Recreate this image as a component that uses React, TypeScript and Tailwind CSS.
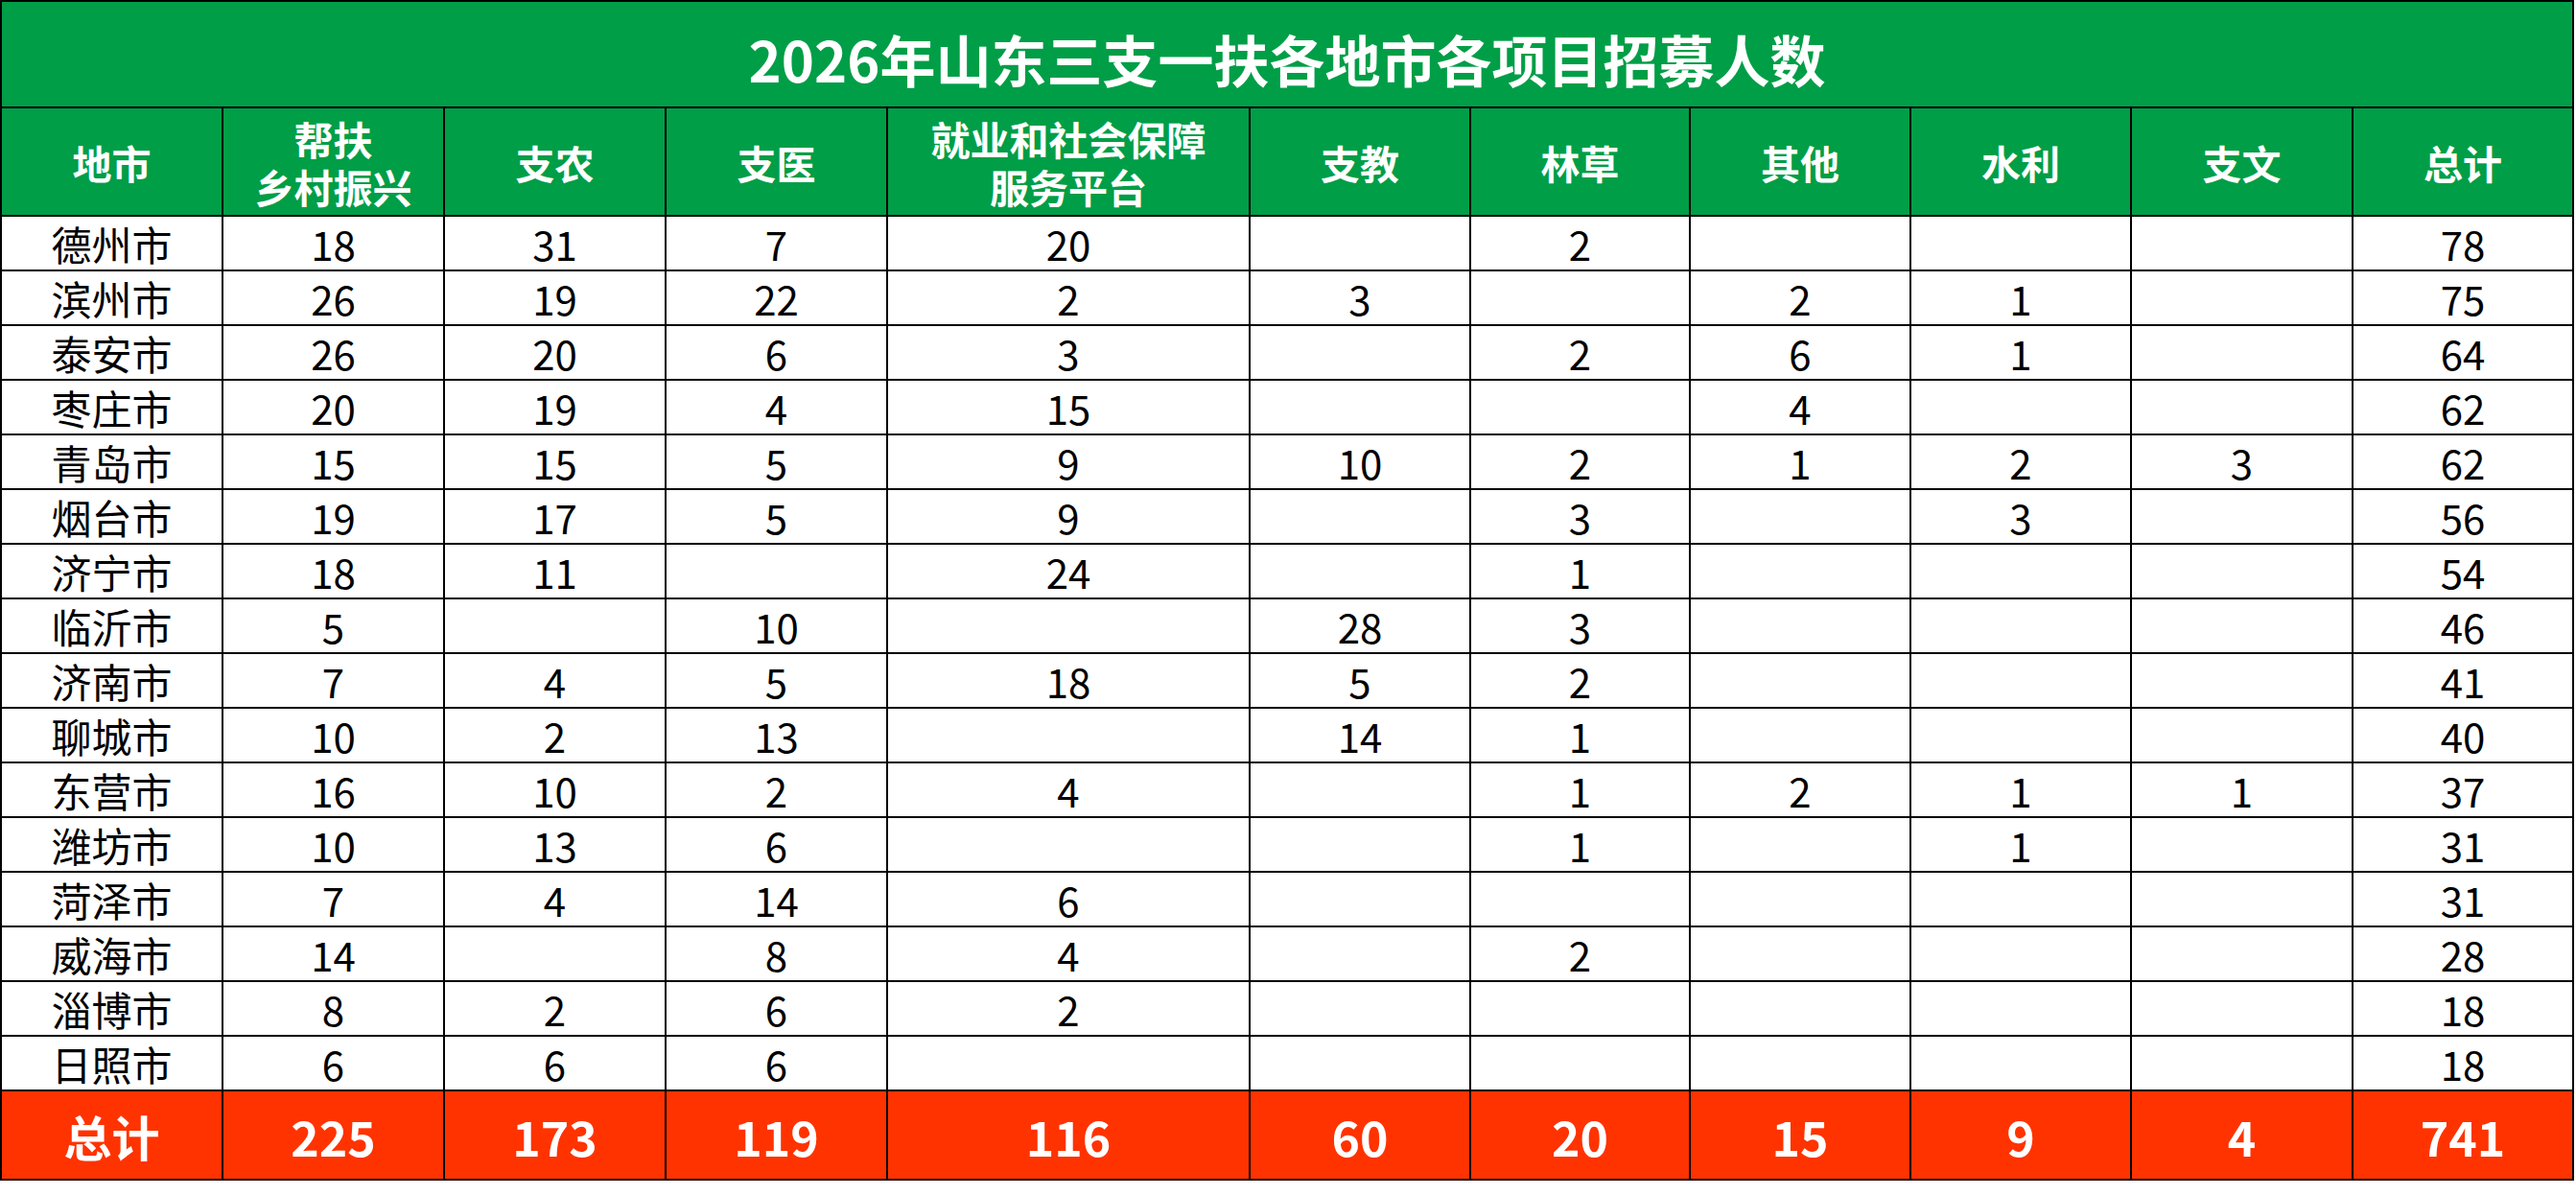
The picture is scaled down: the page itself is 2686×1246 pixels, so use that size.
import React from "react";

const headers: React.ReactNode[] = [
  "地市",
  <>帮扶<br />乡村振兴</>,
  "支农",
  "支医",
  <>就业和社会保障<br />服务平台</>,
  "支教",
  "林草",
  "其他",
  "水利",
  "支文",
  "总计",
];

const rows: (string | number)[][] = [
  ["德州市", 18, 31, 7, 20, "", 2, "", "", "", 78],
  ["滨州市", 26, 19, 22, 2, 3, "", 2, 1, "", 75],
  ["泰安市", 26, 20, 6, 3, "", 2, 6, 1, "", 64],
  ["枣庄市", 20, 19, 4, 15, "", "", 4, "", "", 62],
  ["青岛市", 15, 15, 5, 9, 10, 2, 1, 2, 3, 62],
  ["烟台市", 19, 17, 5, 9, "", 3, "", 3, "", 56],
  ["济宁市", 18, 11, "", 24, "", 1, "", "", "", 54],
  ["临沂市", 5, "", 10, "", 28, 3, "", "", "", 46],
  ["济南市", 7, 4, 5, 18, 5, 2, "", "", "", 41],
  ["聊城市", 10, 2, 13, "", 14, 1, "", "", "", 40],
  ["东营市", 16, 10, 2, 4, "", 1, 2, 1, 1, 37],
  ["潍坊市", 10, 13, 6, "", "", 1, "", 1, "", 31],
  ["菏泽市", 7, 4, 14, 6, "", "", "", "", "", 31],
  ["威海市", 14, "", 8, 4, "", 2, "", "", "", 28],
  ["淄博市", 8, 2, 6, 2, "", "", "", "", "", 18],
  ["日照市", 6, 6, 6, "", "", "", "", "", "", 18],
];

const totals = ["总计", 225, 173, 119, 116, 60, 20, 15, 9, 4, 741];

export default function App() {
  return (
    <div
      className="w-[2686px] h-[1246px] bg-white"
      style={{ fontFamily: '"Noto Sans CJK SC", "Noto Sans", sans-serif' }}
    >
      <div className="w-[2684px] bg-black p-[2px] grid gap-[2px] grid-cols-[229px_229px_229px_229px_376px_228px_227px_228px_228px_229px_228px] grid-rows-[109px_111px_repeat(16,55px)_91px]">
        <div className="col-span-11 bg-[#009e47] flex items-center justify-center text-white font-bold text-[58px] leading-none pt-[8px]">
          2026年山东三支一扶各地市各项目招募人数
        </div>
        {headers.map((h, i) => (
          <div
            key={"h" + i}
            className="bg-[#009e47] flex items-center justify-center text-center text-white font-bold text-[41px] leading-[50px]"
          >
            <div>{h}</div>
          </div>
        ))}
        {rows.map((r, ri) =>
          r.map((c, ci) => (
            <div
              key={ri + "-" + ci}
              className="bg-white flex items-center justify-center text-black text-[42px] leading-none"
            >
              {c}
            </div>
          ))
        )}
        {totals.map((t, i) => (
          <div
            key={"t" + i}
            className="bg-[#ff3300] flex items-center justify-center text-white font-bold text-[50px] leading-none"
          >
            {t}
          </div>
        ))}
      </div>
    </div>
  );
}
